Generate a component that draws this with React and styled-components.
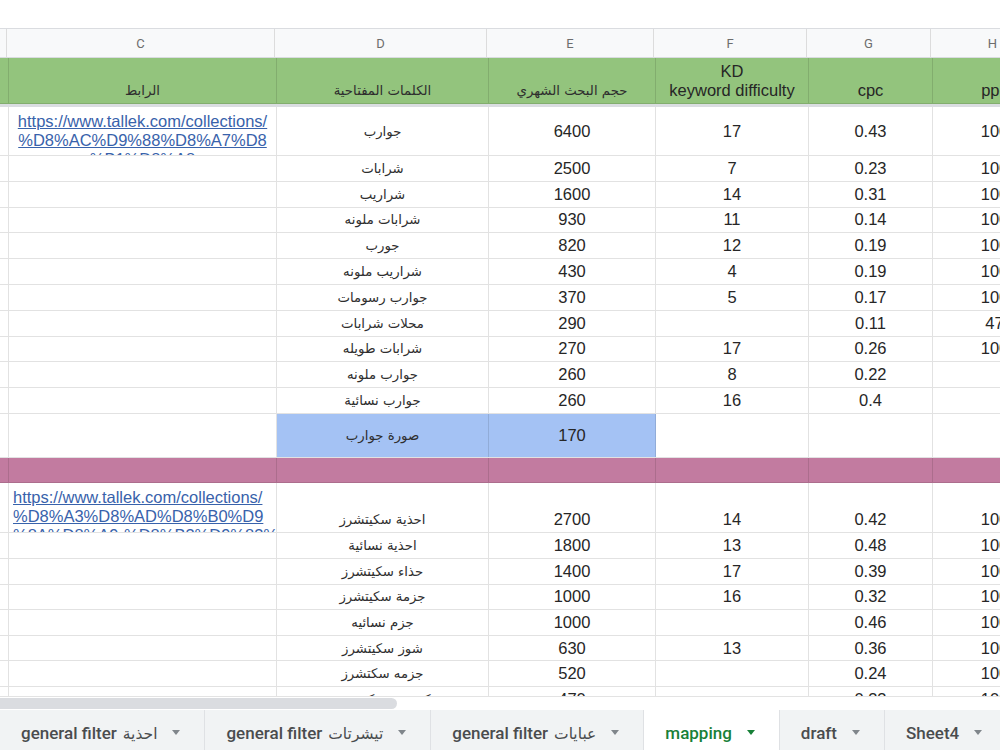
import React from "react";
import styled, { createGlobalStyle } from "styled-components";

const GRID = "rgba(0, 0, 0, 0.115)";

const GlobalStyle = createGlobalStyle`
  html, body {
    margin: 0;
    padding: 0;
    background: #fff;
  }
  body {
    font-family: "Liberation Sans", "DejaVu Sans", Arial, sans-serif;
    overflow: hidden;
  }
`;

// column widths, B is only a sliver on the left
const columns = [
  { key: "B", w: 7 },
  { key: "C", w: 268 },
  { key: "D", w: 212 },
  { key: "E", w: 167 },
  { key: "F", w: 153 },
  { key: "G", w: 124 },
  { key: "H", w: 124 },
  { key: "I", w: 100 },
];

const Page = styled.div`
  width: 1000px;
  height: 750px;
  display: flex;
  flex-direction: column;
  overflow: hidden;
`;

const TopSpace = styled.div`
  height: 28px;
  flex-shrink: 0;
  background: #fff;
`;

const Sheet = styled.div`
  flex: 1;
  overflow: hidden;
  display: flex;
  flex-direction: column;
`;

const LetterRow = styled.div`
  display: flex;
  flex-shrink: 0;
  height: 30px;
  box-sizing: border-box;
  border-top: 1px solid #dadce0;
  border-bottom: 1px solid #dadce0;
  background: #f8f9fa;
`;

const Letter = styled.div`
  flex: 0 0 ${(p) => p.$w}px;
  box-sizing: border-box;
  border-right: 1px solid #dcdcdc;
  display: flex;
  align-items: center;
  justify-content: center;
  font-family: Roboto, "Liberation Sans", sans-serif;
  font-size: 13px;
  color: #6d6d6d;
`;

const Row = styled.div`
  display: flex;
  flex-shrink: 0;
  height: ${(p) => p.$h}px;
  box-sizing: border-box;
  border-bottom: 1px solid ${GRID};
  background: ${(p) => p.$bg || "#fff"};
`;

const FrozenLine = styled.div`
  height: 3px;
  flex-shrink: 0;
  background: #dadde1;
`;

const alignMap = { top: "flex-start", bottom: "flex-end", middle: "center" };
const padMap = { top: "5px 4px 0", bottom: "0 4px 3px", middle: "0 4px" };

const Cell = styled.div`
  flex: 0 0 ${(p) => p.$w}px;
  box-sizing: border-box;
  border-right: 1px solid ${GRID};
  background: ${(p) => p.$bg || "transparent"};
  display: flex;
  justify-content: ${(p) => (p.$left ? "flex-start" : "center")};
  align-items: ${(p) => alignMap[p.$v || "middle"]};
  padding: ${(p) => padMap[p.$v || "middle"]};
  overflow: hidden;
  white-space: nowrap;
  font-size: 16.5px;
  line-height: 19px;
  color: #262626;
  text-align: center;
`;

// Arabic falls back to DejaVu, which runs much wider than the sheet's font
const Ar = styled.span`
  font-family: "DejaVu Sans", sans-serif;
  font-size: 13.3px;
  color: #2e2e2e;
`;

const Link = styled.div`
  color: #3862ab;
  text-decoration: underline;
  text-align: ${(p) => (p.$left ? "left" : "center")};
  span {
    display: block;
  }
`;

const ScrollTrack = styled.div`
  height: 14px;
  flex-shrink: 0;
  box-sizing: border-box;
  border-top: 1px solid #e3e3e3;
  padding-top: 1px;
  background: #fff;
`;

const Thumb = styled.div`
  width: 397px;
  height: 11px;
  background: #dadce0;
  border-radius: 0 6px 6px 0;
`;

const TabBar = styled.div`
  height: 40px;
  flex-shrink: 0;
  display: flex;
  background: #f1f3f4;
`;

const Tab = styled.div`
  display: flex;
  align-items: center;
  gap: 15px;
  padding: 5px 24px 0 21px;
  border-right: 1px solid #dfe1e4;
  background: ${(p) => (p.$active ? "#fff" : "transparent")};
  color: ${(p) => (p.$active ? "#188038" : "#4a4c4e")};
  font-family: Roboto, "DejaVu Sans", sans-serif;
  font-weight: 500;
  font-size: 17px;
  white-space: nowrap;
  flex-shrink: 0;
`;

const TabAr = styled.span`
  font-family: "DejaVu Sans", sans-serif;
  font-weight: 400;
  font-size: 15.5px;
  margin-left: 6px;
`;

const Caret = styled.span`
  width: 0;
  height: 0;
  border-left: 4px solid transparent;
  border-right: 4px solid transparent;
  border-top: 5px solid ${(p) => (p.$active ? "#188038" : "#80868b")};
`;

const GREEN = "#93c47d";
const BLUE = "#a4c2f4";
const PINK = "#c27ba0";

const block1 = [
  ["شرابات", "2500", "7", "0.23", "100"],
  ["شراريب", "1600", "14", "0.31", "100"],
  ["شرابات ملونه", "930", "11", "0.14", "100"],
  ["جورب", "820", "12", "0.19", "100"],
  ["شراريب ملونه", "430", "4", "0.19", "100"],
  ["جوارب رسومات", "370", "5", "0.17", "100"],
  ["محلات شرابات", "290", "", "0.11", "47"],
  ["شرابات طويله", "270", "17", "0.26", "100"],
  ["جوارب ملونه", "260", "8", "0.22", ""],
  ["جوارب نسائية", "260", "16", "0.4", ""],
];

const block2 = [
  ["احذية نسائية", "1800", "13", "0.48", "100"],
  ["حذاء سكيتشرز", "1400", "17", "0.39", "100"],
  ["جزمة سكيتشرز", "1000", "16", "0.32", "100"],
  ["جزم نسائيه", "1000", "", "0.46", "100"],
  ["شوز سكيتشرز", "630", "13", "0.36", "100"],
  ["جزمه سكتشرز", "520", "", "0.24", "100"],
  ["كوتشي سكيتشرز", "470", "", "0.33", "100"],
];

const tabs = [
  { name: "general filter", ar: "احذية" },
  { name: "general filter", ar: "تيشرتات" },
  { name: "general filter", ar: "عبايات" },
  { name: "mapping", active: true },
  { name: "draft" },
  { name: "Sheet4" },
];

const w = (k) => columns.find((c) => c.key === k).w;

function ValueRow({ h, values, v, fill }) {
  const [d, e, f, g, hh] = values;
  return (
    <Row $h={h}>
      <Cell $w={w("B")} />
      <Cell $w={w("C")} />
      <Cell $w={w("D")} $v={v} $bg={fill}>
        <Ar>{d}</Ar>
      </Cell>
      <Cell $w={w("E")} $v={v} $bg={fill}>{e}</Cell>
      <Cell $w={w("F")} $v={v}>{f}</Cell>
      <Cell $w={w("G")} $v={v}>{g}</Cell>
      <Cell $w={w("H")} $v={v}>{hh}</Cell>
      <Cell $w={w("I")} />
    </Row>
  );
}

function LinkRow({ h, lines, left, values, v }) {
  const [d, e, f, g, hh] = values;
  return (
    <Row $h={h}>
      <Cell $w={w("B")} />
      <Cell $w={w("C")} $v="top" $left={left}>
        <Link $left={left}>
          {lines.map((l, i) => (
            <span key={i}>{l}</span>
          ))}
        </Link>
      </Cell>
      <Cell $w={w("D")} $v={v}>
        <Ar>{d}</Ar>
      </Cell>
      <Cell $w={w("E")} $v={v}>{e}</Cell>
      <Cell $w={w("F")} $v={v}>{f}</Cell>
      <Cell $w={w("G")} $v={v}>{g}</Cell>
      <Cell $w={w("H")} $v={v}>{hh}</Cell>
      <Cell $w={w("I")} />
    </Row>
  );
}

export default function App() {
  return (
    <Page>
      <GlobalStyle />
      <TopSpace />
      <Sheet>
        <LetterRow>
          {columns.map((c) => (
            <Letter key={c.key} $w={c.w}>
              {c.key === "B" ? "" : c.key}
            </Letter>
          ))}
        </LetterRow>

        <Row $h={46} $bg={GREEN}>
          <Cell $w={w("B")} />
          <Cell $w={w("C")} $v="bottom">
            <Ar>الرابط</Ar>
          </Cell>
          <Cell $w={w("D")} $v="bottom">
            <Ar>الكلمات المفتاحية</Ar>
          </Cell>
          <Cell $w={w("E")} $v="bottom">
            <Ar>حجم البحث الشهري</Ar>
          </Cell>
          <Cell $w={w("F")} $v="bottom">
            <div>
              KD
              <br />
              keyword difficulty
            </div>
          </Cell>
          <Cell $w={w("G")} $v="bottom">cpc</Cell>
          <Cell $w={w("H")} $v="bottom">ppc</Cell>
          <Cell $w={w("I")} />
        </Row>
        <FrozenLine />

        <LinkRow
          h={49}
          lines={[
            "https://www.tallek.com/collections/",
            "%D8%AC%D9%88%D8%A7%D8",
            "%B1%D8%A8",
          ]}
          values={["جوارب", "6400", "17", "0.43", "100"]}
        />
        {block1.map((r, i) => (
          <ValueRow key={i} h={25.8} values={r} />
        ))}
        <ValueRow h={44} values={["صورة جوارب", "170", "", "", ""]} fill={BLUE} />
        <Row $h={25.5} $bg={PINK}>
          {columns.map((c) => (
            <Cell key={c.key} $w={c.w} />
          ))}
        </Row>

        <LinkRow
          h={50}
          left
          v="bottom"
          lines={[
            "https://www.tallek.com/collections/",
            "%D8%A3%D8%AD%D8%B0%D9",
            "%8A%D8%A9-%D8%B3%D9%83%D9%8A%D8%AA",
          ]}
          values={["احذية سكيتشرز", "2700", "14", "0.42", "100"]}
        />
        {block2.map((r, i) => (
          <ValueRow key={i} h={25.6} values={r} />
        ))}
      </Sheet>

      <ScrollTrack>
        <Thumb />
      </ScrollTrack>

      <TabBar>
        {tabs.map((t, i) => (
          <Tab key={i} $active={t.active}>
            <span>
              {t.name}
              {t.ar && <TabAr>{t.ar}</TabAr>}
            </span>
            <Caret $active={t.active} />
          </Tab>
        ))}
      </TabBar>
    </Page>
  );
}
